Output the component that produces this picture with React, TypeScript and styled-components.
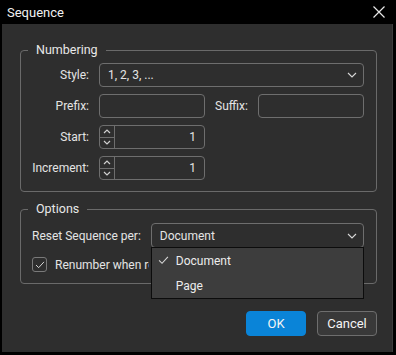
import { createGlobalStyle } from "styled-components";
import styled from "styled-components";

const GlobalStyle = createGlobalStyle`
  html, body {
    margin: 0;
    padding: 0;
    background: #000;
  }
  * {
    box-sizing: border-box;
  }
`;

const Window = styled.div`
  width: 396px;
  height: 355px;
  background: #000;
  display: flex;
  flex-direction: column;
  font-family: Roboto, "Liberation Sans", sans-serif;
  font-size: 12px;
  color: #e4e4e4;
`;

const TitleBar = styled.div`
  height: 24px;
  flex-shrink: 0;
  display: flex;
  align-items: center;
  justify-content: space-between;
  padding: 0 11px 0 7px;
  color: #f2f2f2;
  font-size: 13px;
`;

const CloseButton = styled.div`
  width: 12px;
  height: 12px;
  display: flex;
  align-items: center;
  justify-content: center;
`;

const Body = styled.div`
  flex: 1;
  margin: 0 3px 3px 2px;
  background: #2e2e2e;
  border-right: 1px solid #3c3c3c;
  padding: 18px 15px 0 18px;
  display: flex;
  flex-direction: column;
  gap: 9px;
`;

const Group = styled.fieldset<{ $gap: number; $top: number }>`
  margin: 0;
  border: 1px solid #6a6a6a;
  border-radius: 4px;
  padding: ${(p) => p.$top}px 12px 11px 11px;
  display: flex;
  flex-direction: column;
  gap: ${(p) => p.$gap}px;
  min-width: 0;
`;

const Legend = styled.legend`
  margin-left: -4px;
  padding: 0 8px;
  line-height: 16px;
  font-size: 12.5px;
  color: #e8e8e8;
`;

const Row = styled.div<{ $height?: number }>`
  display: flex;
  align-items: center;
  gap: 10px;
  height: ${(p) => p.$height ?? 24}px;
`;

const Label = styled.span<{ $width?: number }>`
  width: ${(p) => (p.$width ? `${p.$width}px` : "auto")};
  flex-shrink: 0;
  text-align: right;
  white-space: nowrap;
`;

const Field = styled.div<{ $width?: number }>`
  position: relative;
  height: 100%;
  width: ${(p) => (p.$width ? `${p.$width}px` : "auto")};
  flex: ${(p) => (p.$width ? "0 0 auto" : "1")};
  border: 1px solid #6e6e6e;
  border-radius: 4px;
  background: #2e2e2e;
  display: flex;
  align-items: center;
`;

const SelectText = styled.span`
  flex: 1;
  padding-left: 8px;
  white-space: nowrap;
`;

const Chevron = styled.svg`
  margin-right: 6px;
  flex-shrink: 0;
`;

const SpinColumn = styled.div`
  width: 15px;
  height: 100%;
  border-right: 1px solid #6e6e6e;
  display: flex;
  flex-direction: column;
`;

const SpinHalf = styled.div<{ $top?: boolean }>`
  flex: 1;
  display: flex;
  align-items: center;
  justify-content: center;
  border-bottom: ${(p) => (p.$top ? "1px solid #6e6e6e" : "none")};
`;

const SpinValue = styled.span`
  flex: 1;
  text-align: right;
  padding-right: 8px;
`;

const CheckRow = styled.div`
  display: flex;
  align-items: center;
  gap: 8px;
  height: 15px;
`;

const CheckLabel = styled.span`
  width: 94px;
  white-space: nowrap;
  overflow: hidden;
`;

const CheckBox = styled.div`
  width: 15px;
  height: 15px;
  flex-shrink: 0;
  border: 1px solid #7a7a7a;
  border-radius: 3px;
  display: flex;
  align-items: center;
  justify-content: center;
`;

const Menu = styled.div`
  position: absolute;
  top: 100%;
  left: -1px;
  right: -1px;
  background: #3d3d3d;
  border: 1px solid #0c0c0c;
  padding: 0;
  z-index: 2;
`;

const MenuItem = styled.div`
  height: 25px;
  display: flex;
  align-items: center;
  padding-left: 6px;
  color: #ececec;
`;

const MenuCheck = styled.span`
  width: 18px;
  display: flex;
  align-items: center;
`;

const Buttons = styled.div`
  display: flex;
  justify-content: flex-end;
  gap: 11px;
  margin-top: 18px;
`;

const Button = styled.div<{ $primary?: boolean }>`
  width: 60px;
  height: 25px;
  border-radius: 4px;
  display: flex;
  align-items: center;
  justify-content: center;
  font-size: 13px;
  background: ${(p) => (p.$primary ? "#0a84d8" : "#393939")};
  border: 1px solid ${(p) => (p.$primary ? "#0a84d8" : "#6e6e6e")};
  color: #f4f4f4;
`;

const Down = () => (
  <Chevron width="10" height="6" viewBox="0 0 10 6">
    <path d="M1 1 L5 5 L9 1" fill="none" stroke="#d8d8d8" strokeWidth="1.1" />
  </Chevron>
);

const SmallArrow = ({ up }: { up?: boolean }) => (
  <svg width="8" height="5" viewBox="0 0 8 5">
    <path
      d={up ? "M1 4 L4 1 L7 4" : "M1 1 L4 4 L7 1"}
      fill="none"
      stroke="#d0d0d0"
      strokeWidth="1.2"
    />
  </svg>
);

const Tick = ({ size = 11 }: { size?: number }) => (
  <svg width={size} height={size * 0.8} viewBox="0 0 11 9">
    <path d="M1 4.5 L4 7.5 L10 1" fill="none" stroke="#d8d8d8" strokeWidth="1.1" />
  </svg>
);

const Spinner = ({ value }: { value: string }) => (
  <Field $width={106}>
    <SpinColumn>
      <SpinHalf $top>
        <SmallArrow up />
      </SpinHalf>
      <SpinHalf>
        <SmallArrow />
      </SpinHalf>
    </SpinColumn>
    <SpinValue>{value}</SpinValue>
  </Field>
);

const App = () => {
  return (
    <Window>
      <GlobalStyle />
      <TitleBar>
        <span>Sequence</span>
        <CloseButton>
          <svg width="12" height="12" viewBox="0 0 12 12">
            <path d="M0.5 0.5 L11.5 11.5 M11.5 0.5 L0.5 11.5" stroke="#e8e8e8" strokeWidth="1.2" />
          </svg>
        </CloseButton>
      </TitleBar>
      <Body>
        <Group $gap={7} $top={5}>
          <Legend>Numbering</Legend>
          <Row>
            <Label $width={57}>Style:</Label>
            <Field>
              <SelectText>1, 2, 3, ...</SelectText>
              <Down />
            </Field>
          </Row>
          <Row>
            <Label $width={57}>Prefix:</Label>
            <Field $width={106} />
            <Label>Suffix:</Label>
            <Field />
          </Row>
          <Row>
            <Label $width={57}>Start:</Label>
            <Spinner value="1" />
          </Row>
          <Row>
            <Label $width={57}>Increment:</Label>
            <Spinner value="1" />
          </Row>
        </Group>
        <Group $gap={9} $top={6}>
          <Legend>Options</Legend>
          <Row $height={25}>
            <Label>Reset Sequence per:</Label>
            <Field>
              <SelectText>Document</SelectText>
              <Down />
              <Menu>
                <MenuItem>
                  <MenuCheck>
                    <Tick />
                  </MenuCheck>
                  Document
                </MenuItem>
                <MenuItem>
                  <MenuCheck />
                  Page
                </MenuItem>
              </Menu>
            </Field>
          </Row>
          <CheckRow>
            <CheckBox>
              <Tick size={10} />
            </CheckBox>
            <CheckLabel>Renumber when reordering</CheckLabel>
          </CheckRow>
        </Group>
        <Buttons>
          <Button $primary>OK</Button>
          <Button>Cancel</Button>
        </Buttons>
      </Body>
    </Window>
  );
};

export default App;
